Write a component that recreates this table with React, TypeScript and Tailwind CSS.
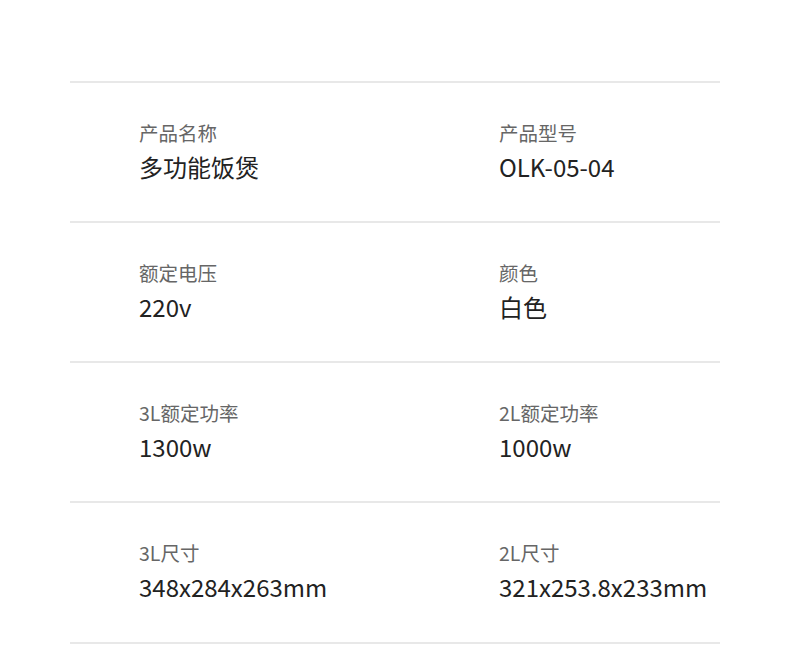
import React from "react";

const rows: [string, string, string, string][] = [
  ["产品名称", "多功能饭煲", "产品型号", "OLK-05-04"],
  ["额定电压", "220v", "颜色", "白色"],
  ["3L额定功率", "1300w", "2L额定功率", "1000w"],
  ["3L尺寸", "348x284x263mm", "2L尺寸", "321x253.8x233mm"],
];

function Cell({ label, value, first }: { label: string; value: string; first?: boolean }) {
  return (
    <div className={first ? "w-[360px] flex flex-col" : "flex flex-col"}>
      <div className="text-[19.5px] leading-[28px] text-[#666666]">{label}</div>
      <div className="mt-[3px] text-[24px] leading-[34px] text-[#222222]">{value}</div>
    </div>
  );
}

export default function App() {
  return (
    <div
      className="w-[790px] h-[645px] bg-white pt-[81px] overflow-hidden"
      style={{ fontFamily: '"Noto Sans CJK SC", "Noto Sans", sans-serif' }}
    >
      <div className="ml-[70px] w-[650px] border-b-2 border-[#e8e8e8]">
        {rows.map((r, i) => (
          <div
            key={i}
            className={
              i === 3
                ? "h-[141px] border-t-2 border-[#e8e8e8] flex items-center pl-[69px] pb-[2px]"
                : "h-[140px] border-t-2 border-[#e8e8e8] flex items-center pl-[69px] pb-[1px]"
            }
          >
            <Cell label={r[0]} value={r[1]} first />
            <Cell label={r[2]} value={r[3]} />
          </div>
        ))}
      </div>
    </div>
  );
}
